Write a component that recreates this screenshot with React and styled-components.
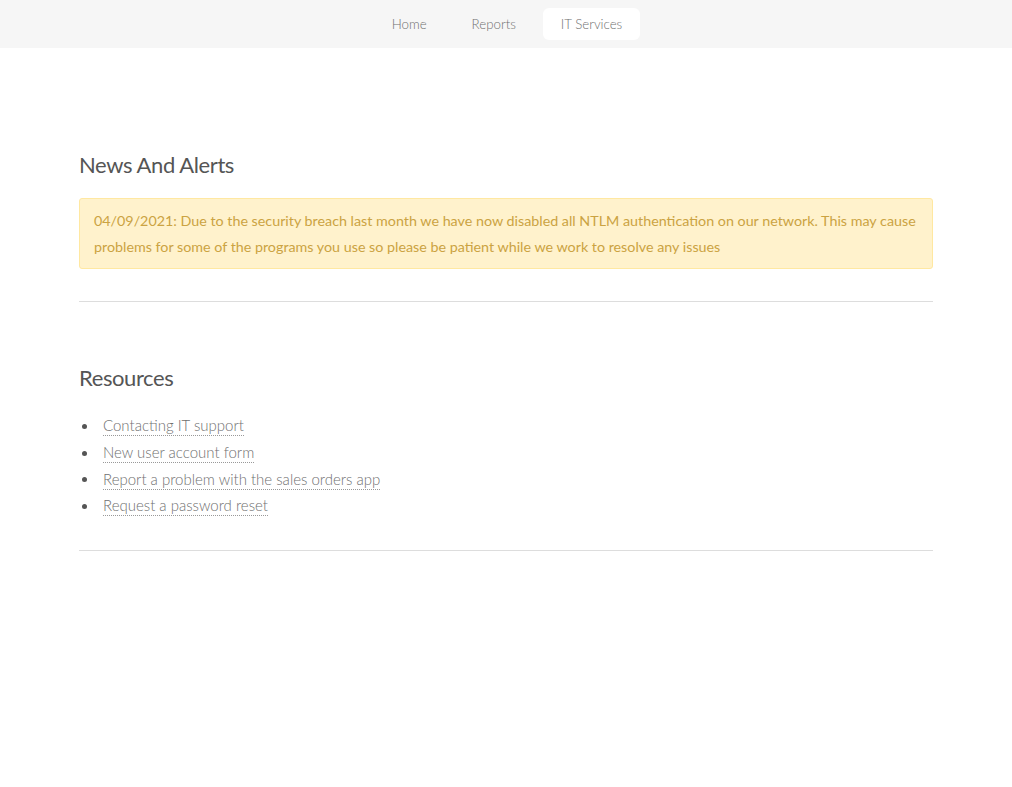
import React from 'react'
import styled, { createGlobalStyle } from 'styled-components'

const Global = createGlobalStyle`
body{
  margin:0;
  background:#ffffff;
  font-family: Lato, "Noto Sans", sans-serif;
  color:#666;
}
`

const links = [
  'Contacting IT support',
  'New user account form',
  'Report a problem with the sales orders app',
  'Request a password reset',
]

function App() {
  return (
    <>
      <Global />
      <Nav>
        <NavItem>Home</NavItem>
        <NavItem>Reports</NavItem>
        <NavItem active>IT Services</NavItem>
      </Nav>
      <Main>
        <Section>
          <Heading>News And Alerts</Heading>
          <Alert>
            04/09/2021: Due to the security breach last month we have now disabled all NTLM authentication on our network. This may cause problems for some of the programs you use so please be patient while we work to resolve any issues
          </Alert>
        </Section>
        <Rule />
        <Section>
          <Heading>Resources</Heading>
          <List>
            {links.map(l => (
              <Item key={l}><Link href="#">{l}</Link></Item>
            ))}
          </List>
        </Section>
        <Rule top={30} />
      </Main>
    </>
  )
}

export default App

const Nav = styled.nav`
height:48px;
background:#f6f6f6;
display:flex;
justify-content:center;
align-items:center;
gap:9px;
padding-left:2px;
box-sizing:border-box;
`
const NavItem = styled.a`
height:32px;
display:flex;
align-items:center;
padding:0 18px;
border-radius:6px;
font-size:13.3px;
font-weight:300;
color:#707070;
background:${p => p.active ? '#ffffff' : 'transparent'};
cursor:pointer;
`
const Main = styled.main`
width:854px;
margin:0 auto;
padding-top:103px;
`
const Section = styled.section`
padding-top:0;
`
const Heading = styled.h2`
font-size:22px;
font-weight:400;
color:#555;
margin:0 0 19px;
line-height:28px;
letter-spacing:-0.4px;
`
const Alert = styled.div`
background:#fff2cc;
border:1px solid #ffe8a1;
border-radius:3px;
color:#cba342;
font-size:14.3px;
font-weight:400;
line-height:26px;
padding:9px 14px 8px;
`
const Rule = styled.hr`
border:0;
border-top:1px solid #ddd;
margin:${p => p.top || 32}px 0 62px;
`
const List = styled.ul`
margin:0;
padding:2px 0 0;
list-style:none;
`
const Item = styled.li`
display:flex;
align-items:center;
gap:16px;
height:26.7px;
padding-left:3px;
font-size:15px;
font-weight:300;
&::before{
  content:'';
  width:5px;
  height:5px;
  border-radius:50%;
  background:#555;
  flex:none;
}
`
const Link = styled.a`
color:#707070;
text-decoration:none;
line-height:19px;
border-bottom:1px dotted #999;
`
